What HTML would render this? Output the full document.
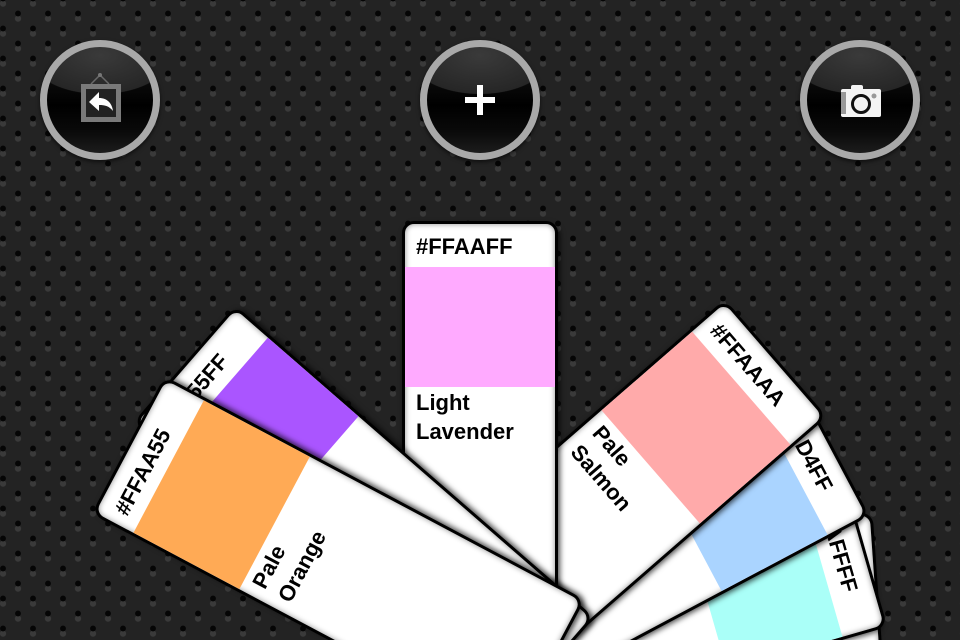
<!DOCTYPE html>
<html><head><meta charset="utf-8"><style>
html{width:960px;height:640px;overflow:hidden;margin:0;padding:0}
body{margin:0;padding:0;width:960px;height:640px;overflow:hidden;position:relative;font-family:"Liberation Sans",Arial,sans-serif;
background-color:#232323;
background-image:radial-gradient(circle at 50% 45%,#050505 2.6px,rgba(0,0,0,0) 3.2px),radial-gradient(circle at 50% 45%,#050505 2.6px,rgba(0,0,0,0) 3.2px),radial-gradient(circle at 50% 62%,#3a3a3a 2.8px,rgba(0,0,0,0) 3.4px),radial-gradient(circle at 50% 62%,#3a3a3a 2.8px,rgba(0,0,0,0) 3.4px);
background-size:30px 30px;background-position:3px 0,18px 15px,3px 0,18px 15px}
.btn{position:absolute;width:106px;height:106px;border-radius:50%;border:7px solid #a9a9a9;
background:radial-gradient(ellipse 110% 60% at 50% 8%,#3a3a3a 0,#262626 60%,rgba(0,0,0,0) 61%),linear-gradient(#1a1a1a,#000 55%,#0a0a0a 80%,#1c1c1c);box-shadow:0 2px 4px rgba(0,0,0,.6)}
.card{position:absolute;width:150px;height:470px;background:#fff;border:3px solid #000;border-radius:12px;
box-shadow:inset 0 0 6px rgba(0,0,0,.45),2px 3px 6px rgba(0,0,0,.7);transform-origin:78px 0;overflow:hidden}
.card .hex{position:absolute;left:11px;top:10px;font-weight:bold;font-size:22px;color:#000}
.card .sw{position:absolute;left:0;right:0;top:43px;height:120px}
.card .nm{position:absolute;left:11px;top:164px;font-weight:bold;font-size:22px;line-height:29px;color:#000}
</style></head><body>

<div class="btn" style="left:40px;top:40px">
<svg width="106" height="106" viewBox="0 0 106 106" style="position:absolute;left:0;top:0">
<path d="M44 37 L53 28 L62 37" stroke="#6a6a6a" stroke-width="1.5" fill="none"/>
<circle cx="53" cy="28" r="2" fill="#777"/>
<rect x="34" y="37" width="40" height="38" fill="#7a7a7a"/>
<rect x="39" y="42" width="30" height="28" fill="#222"/>
<path d="M42 55 L52 45 L52 51 C60 51 65 56 66 64 C62 59 58 58 52 58 L52 64 Z" fill="#fff"/>
</svg></div>

<div class="btn" style="left:420px;top:40px">
<svg width="106" height="106" viewBox="0 0 106 106" style="position:absolute;left:0;top:0">
<rect x="50" y="38" width="6" height="30" fill="#fff"/><rect x="38" y="50" width="30" height="6" fill="#fff"/>
</svg></div>

<div class="btn" style="left:800px;top:40px">
<svg width="106" height="106" viewBox="0 0 106 106" style="position:absolute;left:0;top:0">
<rect x="34" y="42" width="40" height="28" rx="2" fill="#f4f4f4"/>
<rect x="44" y="38" width="12" height="6" rx="2" fill="#f4f4f4"/>
<rect x="34" y="45" width="5" height="22" fill="#999"/>
<circle cx="54" cy="57" r="8.5" fill="none" stroke="#111" stroke-width="3"/>
<circle cx="67" cy="49" r="2.5" fill="#999"/>
</svg></div>

<div class="card" style="left:800px;top:590px;transform:rotate(86deg)"><div class="hex">#AAFFCC</div><div class="sw" style="background:#aaeec4"></div></div>
<div class="card" style="left:788px;top:552px;transform:rotate(74deg)"><div class="hex">#AAFFFF</div><div class="sw" style="background:#aafff8"></div><div class="nm">Pale<br>Cyan</div></div>
<div class="card" style="left:755px;top:447px;transform:rotate(62deg)"><div class="hex">#AAD4FF</div><div class="sw" style="background:#aad4ff"></div><div class="nm">Pale<br>Blue</div></div>
<div class="card" style="left:698px;top:358px;transform:rotate(49deg)"><div class="hex">#FFAAAA</div><div class="sw" style="background:#ffaaaa"></div><div class="nm">Pale<br>Salmon</div></div>
<div class="card" style="left:402px;top:221px"><div class="hex">#FFAAFF</div><div class="sw" style="background:#ffaaff"></div><div class="nm">Light<br>Lavender</div></div>
<div class="card" style="left:106px;top:364px;transform:rotate(-49deg)"><div class="hex">#AA55FF</div><div class="sw" style="background:#aa55ff"></div><div class="nm">Light<br>Purple</div></div>
<div class="card" style="left:50px;top:445px;transform:rotate(-62deg)"><div class="hex">#FFAA55</div><div class="sw" style="background:#ffaa55"></div><div class="nm">Pale<br>Orange</div></div>

</body></html>
